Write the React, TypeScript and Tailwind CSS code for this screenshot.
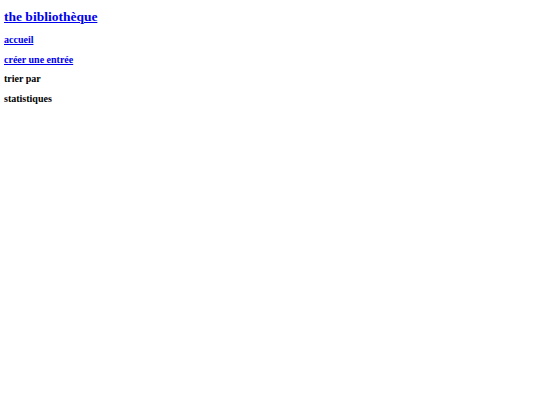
import React from "react"

const links = [
  { label: "accueil", href: true },
  { label: "créer une entrée", href: true },
  { label: "trier par", href: false },
  { label: "statistiques", href: false },
]

export default function App() {
  return (
    <div className="min-h-[405px] bg-white px-[4px] pt-[9px] font-['Liberation_Serif',serif] font-bold text-black">
      <h1 className="text-[13.5px] leading-[16px]">
        <a href="#" className="text-[#0000ee] underline">the bibliothèque</a>
      </h1>
      <nav className="mt-[5px] flex flex-col">
        {links.map((l) =>
          l.href ? (
            <a key={l.label} href="#" className="text-[10px] leading-[19.67px] text-[#0000ee] underline self-start">
              {l.label}
            </a>
          ) : (
            <span key={l.label} className="text-[10px] leading-[19.67px]">
              {l.label}
            </span>
          )
        )}
      </nav>
    </div>
  )
}
